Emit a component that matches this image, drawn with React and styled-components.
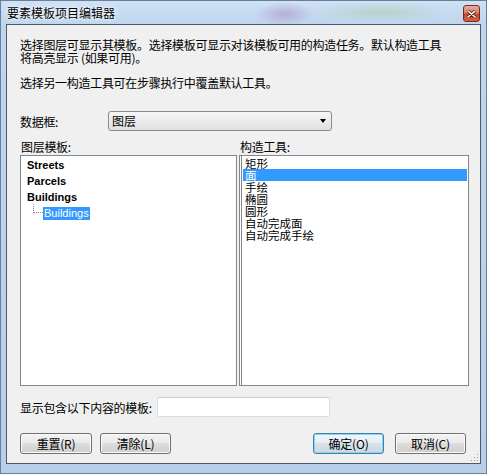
import React from "react"
import styled, { createGlobalStyle } from "styled-components"

const layers = [
  { name: "Streets" },
  { name: "Parcels" },
  { name: "Buildings", children: ["Buildings"] },
]

const tools = ["矩形", "面", "手绘", "椭圆", "圆形", "自动完成面", "自动完成手绘"]

const GlobalStyle = createGlobalStyle`
  html, body {
    margin: 0;
    padding: 0;
    background: #ffffff;
  }
  body {
    font-family: "Noto Sans CJK SC", "Liberation Sans", sans-serif;
    font-size: 12px;
    color: #000;
  }
`

const App = () => {
  return (
    <>
      <GlobalStyle />
      <Window>
        <TitleBar>
          <Title>要素模板项目编辑器</Title>
          <CloseButton>
            <svg width="9" height="8" viewBox="0 0 9 8">
              <path
                d="M1 1 L8 7 M8 1 L1 7"
                stroke="#5a1a10"
                strokeWidth="3"
                strokeLinecap="round"
              />
              <path
                d="M1 1 L8 7 M8 1 L1 7"
                stroke="#ffffff"
                strokeWidth="1.6"
                strokeLinecap="round"
              />
            </svg>
          </CloseButton>
        </TitleBar>
        <Client>
          <Intro>
            选择图层可显示其模板。选择模板可显示对该模板可用的构造任务。默认构造工具
            <br />
            将高亮显示 (如果可用)。
          </Intro>
          <Intro $gap>选择另一构造工具可在步骤执行中覆盖默认工具。</Intro>
          <FieldRow>
            <FieldLabel $width={88}>数据框:</FieldLabel>
            <Select>
              <span>图层</span>
              <Arrow />
            </Select>
          </FieldRow>
          <Panes>
            <PaneLabel>图层模板:</PaneLabel>
            <PaneLabel>构造工具:</PaneLabel>
            <TreeBox>
              {layers.map(layer => (
                <React.Fragment key={layer.name}>
                  <TreeRow>{layer.name}</TreeRow>
                  {layer.children &&
                    layer.children.map(child => (
                      <SubRow key={child}>
                        <Connector />
                        <SelectedLeaf>{child}</SelectedLeaf>
                      </SubRow>
                    ))}
                </React.Fragment>
              ))}
            </TreeBox>
            <ToolBox>
              {tools.map(tool => (
                <ToolItem key={tool} $active={tool === "面"}>
                  {tool}
                </ToolItem>
              ))}
            </ToolBox>
          </Panes>
          <FilterRow>
            <FieldLabel $width={137}>显示包含以下内容的模板:</FieldLabel>
            <TextInput />
          </FilterRow>
          <ButtonRow>
            <ButtonGroup>
              <Button $width={72}>重置(R)</Button>
              <Button $width={71}>清除(L)</Button>
            </ButtonGroup>
            <ButtonGroup $gap={11}>
              <Button $width={71} $focused>
                确定(O)
              </Button>
              <Button $width={71}>取消(C)</Button>
            </ButtonGroup>
          </ButtonRow>
          <Grip>
            <svg width="10" height="10" viewBox="0 0 10 10">
              {[
                [8, 2],
                [5, 5],
                [8, 5],
                [2, 8],
                [5, 8],
                [8, 8],
              ].map(([x, y]) => (
                <rect key={`${x}-${y}`} x={x} y={y} width="1" height="1" fill="#a0a0a0" />
              ))}
            </svg>
          </Grip>
        </Client>
      </Window>
    </>
  )
}

export default App

const Window = styled.div`
  width: 487px;
  height: 474px;
  box-sizing: border-box;
  display: flex;
  flex-direction: column;
  padding: 0 6px 10px 6px;
  box-shadow: inset 0 0 0 1px #6b7f96;
  background: radial-gradient(
      ellipse 30px 12px at 285px 14px,
      rgba(160, 120, 185, 0.45),
      transparent
    ),
    radial-gradient(
      ellipse 70px 10px at 380px 12px,
      rgba(170, 200, 160, 0.5),
      transparent
    ),
    linear-gradient(to bottom, #cfe2f6 0px, #bfd6ee 24px, #b7cfe8 100%);
`

const TitleBar = styled.div`
  height: 24px;
  display: flex;
  justify-content: space-between;
  align-items: flex-start;
`

const Title = styled.div`
  margin: 5px 0 0 1px;
  line-height: 16px;
  font-size: 12px;
  color: #000;
  text-shadow: 0 0 6px #ffffff, 0 0 3px #ffffff;
`

const CloseButton = styled.div`
  width: 17px;
  height: 17px;
  margin: 5px 1px 0 0;
  box-sizing: border-box;
  border: 1px solid #7a2a1c;
  border-radius: 3px;
  display: flex;
  align-items: center;
  justify-content: center;
  background: linear-gradient(
    to bottom,
    #eab0a0 0%,
    #d97d64 45%,
    #c9452a 55%,
    #d2603f 100%
  );
`

const Client = styled.div`
  position: relative;
  height: 440px;
  box-sizing: border-box;
  border: 1px solid #4d5a6a;
  background: #f0f0f0;
  padding: 13px 11px 0 13px;
  display: flex;
  flex-direction: column;
`

const Intro = styled.p`
  margin: ${p => (p.$gap ? "12px" : "0")} 0 0 0;
  line-height: 13px;
  letter-spacing: -0.3px;
  white-space: nowrap;
`

const FieldRow = styled.div`
  display: flex;
  align-items: center;
  height: 20px;
  margin-top: 22px;
`

const FieldLabel = styled.div`
  width: ${p => p.$width}px;
  flex: none;
  letter-spacing: -0.3px;
  white-space: nowrap;
`

const Select = styled.div`
  width: 224px;
  height: 20px;
  box-sizing: border-box;
  border: 1px solid #8a8a8a;
  border-radius: 3px;
  background: linear-gradient(to bottom, #f6f6f6 0%, #ececec 50%, #e0e0e0 100%);
  display: flex;
  align-items: center;
  justify-content: space-between;
  padding: 0 5px 0 3px;
  line-height: 16px;
`

const Arrow = styled.span`
  width: 0;
  height: 0;
  border-left: 3.5px solid transparent;
  border-right: 3.5px solid transparent;
  border-top: 4px solid #000;
`

const Panes = styled.div`
  display: grid;
  grid-template-columns: 217px 1fr;
  grid-template-rows: 13px 231px;
  column-gap: 2px;
  row-gap: 2px;
  margin-top: 9px;
`

const PaneLabel = styled.div`
  line-height: 13px;
  padding-left: 1px;
  letter-spacing: -0.3px;
`

const TreeBox = styled.div`
  box-sizing: border-box;
  border: 1px solid #828790;
  background: #ffffff;
  padding: 1px 0 0 6px;
  font-family: "Liberation Sans", "Noto Sans", sans-serif;
  font-size: 11px;
`

const TreeRow = styled.div`
  height: 16px;
  line-height: 16px;
  font-weight: bold;
`

const SubRow = styled.div`
  position: relative;
  height: 16px;
  display: flex;
  align-items: center;
  padding-left: 16px;
`

const Connector = styled.span`
  position: absolute;
  left: 6px;
  top: -1px;
  width: 9px;
  height: 8px;
  border-left: 1px dotted #8a8a8a;
  border-bottom: 1px dotted #8a8a8a;
`

const SelectedLeaf = styled.span`
  background: #3399ff;
  color: #ffffff;
  height: 13px;
  line-height: 13px;
  padding: 0 1px;
`

const ToolBox = styled.div`
  box-sizing: border-box;
  border: 1px solid #828790;
  border-left: 3px double #828790;
  background: #ffffff;
  padding: 1px 1px 0 1px;
`

const ToolItem = styled.div`
  height: 12px;
  line-height: 12px;
  font-size: 11.5px;
  padding-left: 2px;
  white-space: nowrap;
  background: ${p => (p.$active ? "#3399ff" : "transparent")};
  color: ${p => (p.$active ? "#ffffff" : "#000000")};
`

const FilterRow = styled.div`
  display: flex;
  align-items: center;
  height: 20px;
  margin-top: 11px;
`

const TextInput = styled.div`
  width: 173px;
  height: 20px;
  box-sizing: border-box;
  border: 1px solid #dadde3;
  border-top-color: #c9ccd2;
  border-radius: 2px;
  background: #ffffff;
`

const ButtonRow = styled.div`
  display: flex;
  justify-content: space-between;
  margin-top: 16px;
  padding-right: 3px;
`

const ButtonGroup = styled.div`
  display: flex;
  gap: ${p => p.$gap || 8}px;
`

const Button = styled.div`
  width: ${p => p.$width}px;
  height: 21px;
  box-sizing: border-box;
  border: 1px solid ${p => (p.$focused ? "#3c7fb1" : "#707070")};
  border-radius: 3px;
  box-shadow: ${p =>
    p.$focused ? "inset 0 0 0 1px #8fd4f4" : "inset 0 0 0 1px #fbfbfb"};
  background: ${p =>
    p.$focused
      ? "linear-gradient(to bottom, #f0f6fa 0%, #e6eef4 45%, #d8e2ea 50%, #cbd7e1 100%)"
      : "linear-gradient(to bottom, #f2f2f2 0%, #ebebeb 45%, #dddddd 50%, #cfcfcf 100%)"};
  display: flex;
  align-items: center;
  justify-content: center;
  line-height: 16px;
  letter-spacing: -0.2px;
`

const Grip = styled.div`
  position: absolute;
  right: 1px;
  bottom: 1px;
  width: 10px;
  height: 10px;
  line-height: 0;
`
